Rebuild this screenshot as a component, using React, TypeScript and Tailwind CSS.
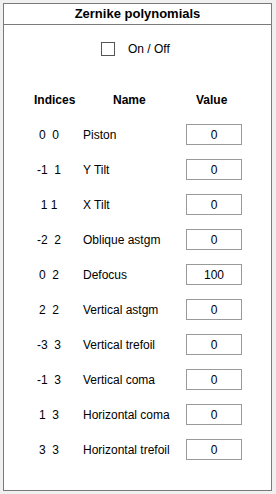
import { useState } from "react";

type Term = { idx: string; name: string; value: string };

const TERMS: Term[] = [
  { idx: "0  0", name: "Piston", value: "0" },
  { idx: "-1  1", name: "Y Tilt", value: "0" },
  { idx: "1 1", name: "X Tilt", value: "0" },
  { idx: "-2  2", name: "Oblique astgm", value: "0" },
  { idx: "0  2", name: "Defocus", value: "100" },
  { idx: "2  2", name: "Vertical astgm", value: "0" },
  { idx: "-3  3", name: "Vertical trefoil", value: "0" },
  { idx: "-1  3", name: "Vertical coma", value: "0" },
  { idx: "1  3", name: "Horizontal coma", value: "0" },
  { idx: "3  3", name: "Horizontal trefoil", value: "0" },
];

export default function App() {
  const [on, setOn] = useState(false);
  const [values, setValues] = useState(TERMS.map((t) => t.value));

  return (
    <div className="h-[494px] w-[276px] bg-[#f0f0f0] pl-[3px] pt-[3px] font-['Liberation_Sans',Arial,sans-serif] text-[12px] text-black">
      <div className="flex h-[488px] w-[269px] flex-col border border-[#7a7a7a] bg-white">
        <div className="flex h-[21px] items-center justify-center border-b border-[#7a7a7a] text-[13px] font-bold">
          Zernike polynomials
        </div>

        <div className="flex items-center pl-[97px] pt-[15px]">
          <button
            onClick={() => setOn((v) => !v)}
            className="flex h-[14px] w-[14px] items-center justify-center border border-[#555] bg-white text-[10px] leading-none"
          >
            {on ? "✓" : null}
          </button>
          <span className="ml-[13px]">On / Off</span>
        </div>

        <div className="mt-[32px] flex h-[20px] items-center font-bold">
          <span className="ml-[30px] w-[79px]">Indices</span>
          <span className="w-[83px]">Name</span>
          <span>Value</span>
        </div>

        <div className="mt-[7px] flex flex-col">
          {TERMS.map((t, i) => (
            <div key={t.name} className="flex h-[35px] items-center">
              <span className="ml-[25px] w-[40px] whitespace-pre text-center">{t.idx}</span>
              <span className="ml-[14px] w-[103px]">{t.name}</span>
              <input
                value={values[i]}
                onChange={(e) => setValues((vs) => vs.map((v, j) => (j === i ? e.target.value : v)))}
                className="h-[21px] w-[56px] border border-[#9a9a9a] bg-white text-center text-[12px] outline-none"
              />
            </div>
          ))}
        </div>
      </div>
    </div>
  );
}
